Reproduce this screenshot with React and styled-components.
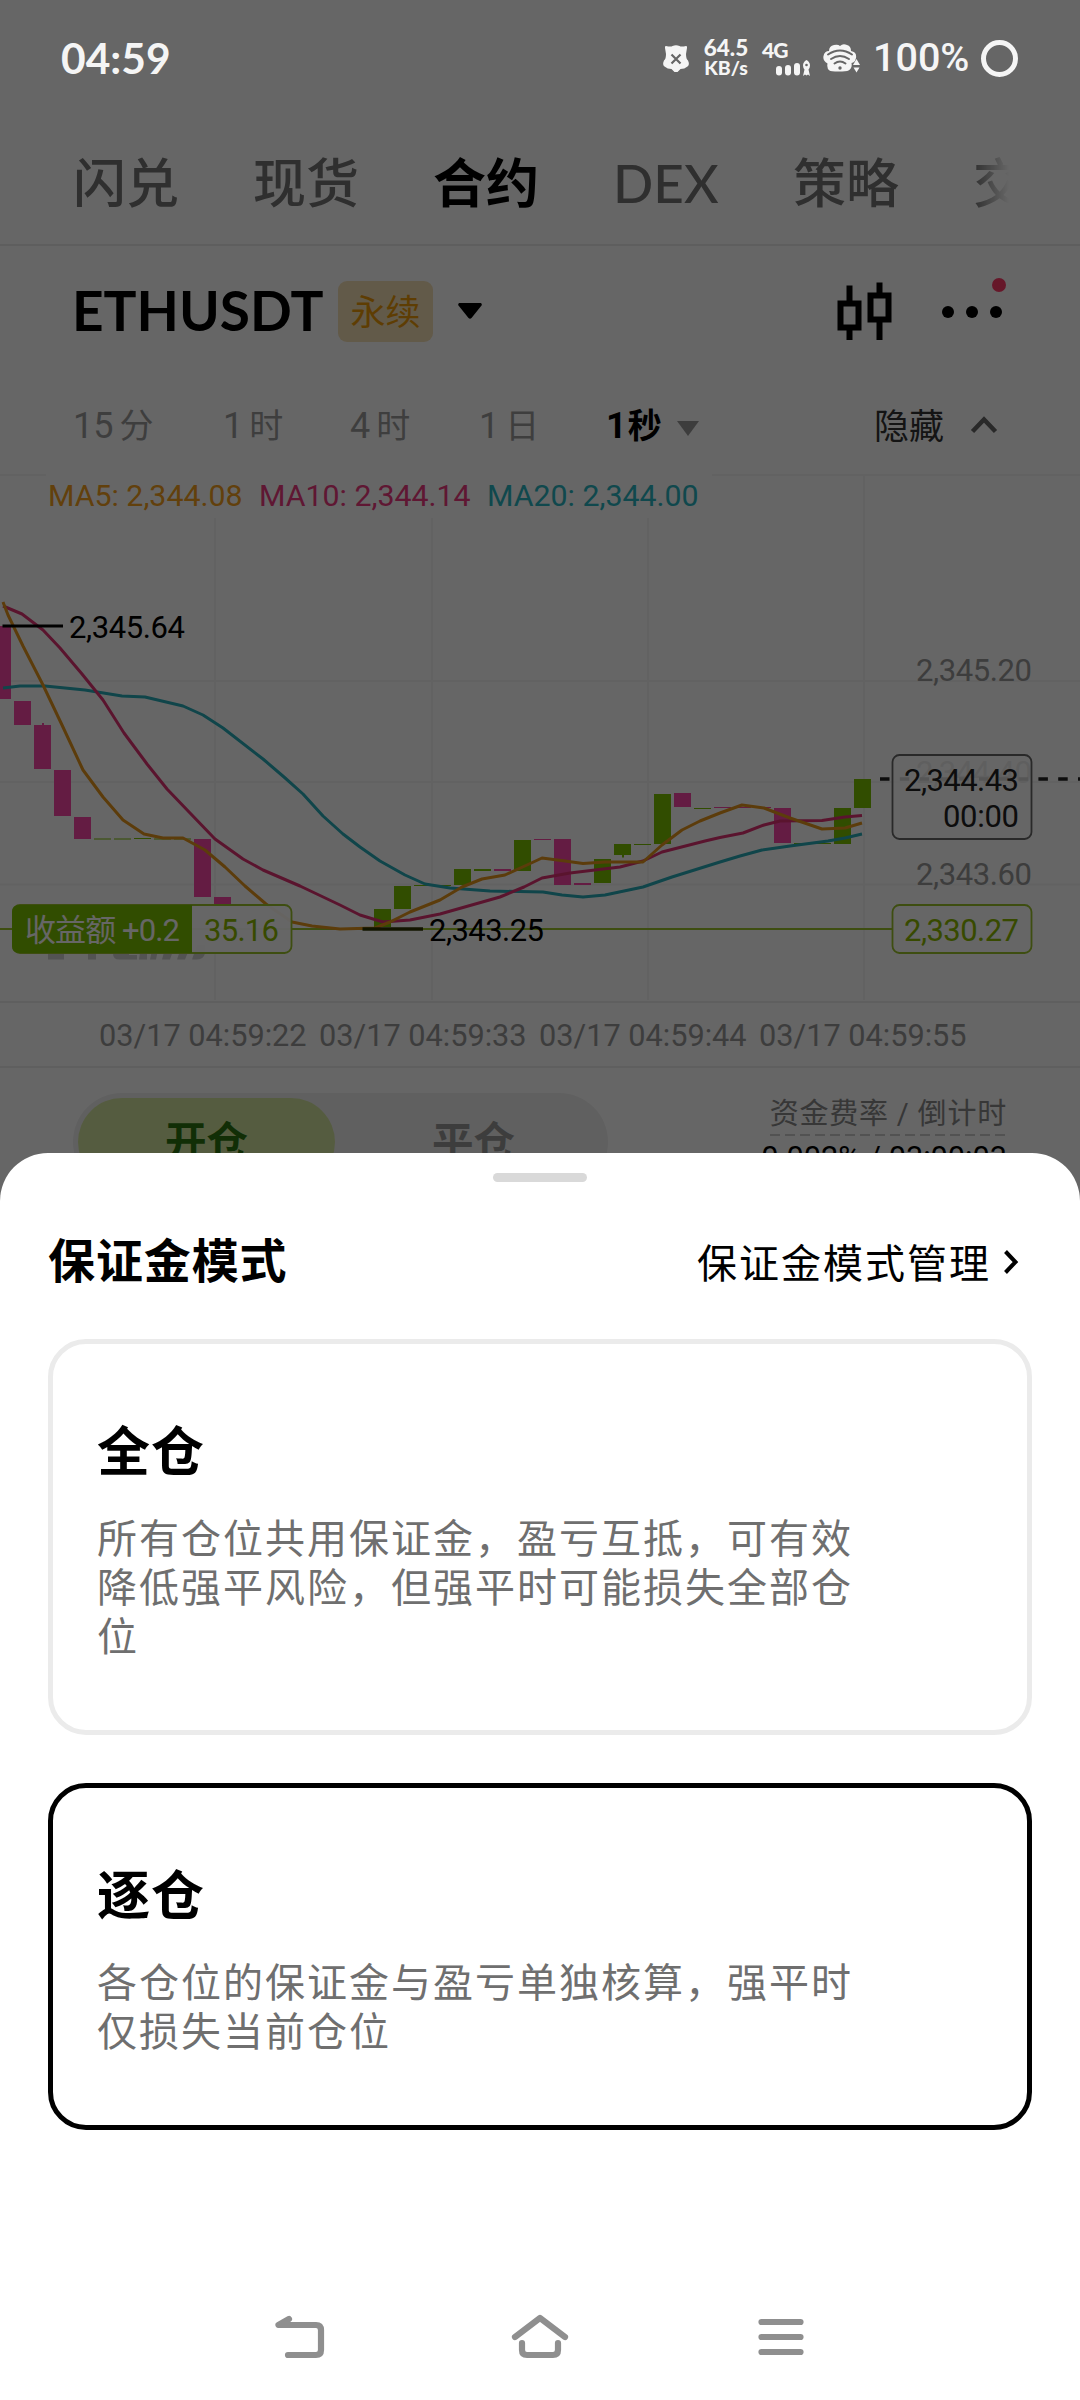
import React from "react";
import styled, { createGlobalStyle } from "styled-components";

const tabs = ["闪兑", "现货", "合约", "DEX", "策略", "交易"];

const intervals = [
  { num: "15", unit: "分", width: 150 },
  { num: "1", unit: "时", width: 127 },
  { num: "4", unit: "时", width: 129 },
  { num: "1", unit: "日", width: 127 },
];

const averages = [
  { label: "MA5: 2,344.08", color: "#f5a020", width: 211 },
  { label: "MA10: 2,344.14", color: "#ee3a80", width: 228 },
  { label: "MA20: 2,344.00", color: "#28b4c0", width: 225 },
];

const times = ["03/17 04:59:22", "03/17 04:59:33", "03/17 04:59:44", "03/17 04:59:55"];

const modes = [
  {
    id: "cross",
    title: "全仓",
    text: "所有仓位共用保证金，盈亏互抵，可有效降低强平风险，但强平时可能损失全部仓位",
  },
  {
    id: "isolated",
    title: "逐仓",
    text: "各仓位的保证金与盈亏单独核算，强平时仅损失当前仓位",
  },
];

const UP = "#7cc000";
const DOWN = "#fa46a8";

// [x, top, bottom, direction]
const candles = [
  [-6, 626, 699, 0],
  [14, 701, 725, 0],
  [34, 725, 769, 0],
  [54, 770, 816, 0],
  [74, 817, 839, 0],
  [94, 838.5, 839.5, 1],
  [114, 838.5, 839.5, 1],
  [134, 838, 839, 1],
  [154, 838.5, 839.5, 1],
  [174, 838.5, 839.5, 1],
  [194, 839, 897, 0],
  [214, 897, 906, 0],
  [374, 909, 927, 1],
  [394, 886, 909, 1],
  [414, 885, 886, 1],
  [434, 885, 886, 1],
  [454, 869, 885, 1],
  [474, 869, 871, 1],
  [494, 869, 871, 0],
  [514, 840, 871, 1],
  [534, 839, 840, 0],
  [554, 839, 885, 0],
  [574, 883, 885, 0],
  [594, 859, 883, 1],
  [614, 844, 855, 1],
  [634, 844, 845, 1],
  [654, 794, 844, 1],
  [674, 793, 807, 0],
  [694, 808, 809, 1],
  [714, 807, 808, 0],
  [734, 807, 808, 0],
  [754, 807, 808, 0],
  [774, 808, 843, 0],
  [794, 843, 844, 1],
  [814, 843, 844, 1],
  [834, 808, 844, 1],
  [854, 779, 808, 1],
];

const ma5 =
  "3,602 8,615 23,646 43,685 62,725 83,770 103,797 123,820 144,834 163,838 183,838 205,850 225,867 245,886 266,904 292,922 312,926 340,929 375,928 390,922 410,912 440,900 462,887 482,879 505,875 527,865 542,858 565,861 583,863.5 605,862 643,862 662,845 682,830 700,821 720,813 742,805 764,808 790,818 822,829 845,828 862,823";
const ma10 =
  "3,606 22,614 43,630 60,648 82,674 103,700 124,733 147,764 167,789 190,813 215,839 243,859 263,870 300,886 340,905 360,915 383,922 410,920 440,914 500,897 524,887 542,878 570,873 620,867 643,861 662,852 705,841 720,837.5 743,833 764,825 780,821 822,820.5 845,817 862,815.5";
const ma20 =
  "3,688 20,686 45,686 85,690 122,696 145,697 183,706 203,715 223,728 263,759 284,777 303,794 323,816 343,834 360,847 380,861 405,875 425,884 450,888 490,891 543,892 562,895 583,897 605,895 643,887 672,877 720,862 740,856 762,850 790,846 828,841 845,838 862,834";

const Price = ({ x, y, width, color, children }) => (
  <text x={x} y={y} textLength={width} fill={color} fontSize="31">
    {children}
  </text>
);

const Chart = () => (
  <ChartSvg viewBox="0 474 1080 527">
    <g stroke="#f5f5f5" strokeWidth="2">
      {[215, 432, 648, 864].map((x) => (
        <line key={x} x1={x} x2={x} y1="474" y2="1000" />
      ))}
      {[475, 681, 782, 884.5].map((y) => (
        <line key={y} x1="0" x2="1080" y1={y} y2={y} />
      ))}
    </g>

    {/* bottom edge of the watermark, the label hides the rest */}
    <g fill="#d0d0d0">
      <path d="M48 945h16v14.500h-16zM88 945h8v14.500h-8zM113 945h24v8h-8v2h8v4.500h-18q-6 0-6-6zM141 945h6v14.500h-8zM153 945h6l-3 14.500h-6zM166 945h9l-5 14.500h-8zM182 945h9l-6 14.500h-8zM197 945h8q2 14.500-8 14.500h-5z" />
    </g>

    {candles.map(([x, top, bottom, up]) => (
      <rect key={x} x={x} y={top} width="17" height={bottom - top} fill={up ? UP : DOWN} />
    ))}
    <rect x="42" y="723" width="2" height="3" fill={DOWN} />
    <rect x="622" y="855" width="2" height="2.500" fill={UP} />

    <line x1="0" x2="892" y1="929" y2="929" stroke="#9cc22c" strokeWidth="1.800" />

    <g fill="none" strokeWidth="3" strokeLinejoin="round">
      <polyline points={ma20} stroke="#28acb8" />
      <polyline points={ma10} stroke="#e03474" />
      <polyline points={ma5} stroke="#e6961c" />
    </g>

    <line x1="2.500" x2="63" y1="626" y2="626" stroke="#000" strokeWidth="3" />
    <Price x={69} y={638} width={116} color="#000">2,345.64</Price>
    <line x1="362.500" x2="423" y1="929" y2="929" stroke="#2d3600" strokeWidth="3.500" />
    <Price x={429} y={941} width={115} color="#000">2,343.25</Price>

    <Price x={916} y={681} width={116} color="#999">2,345.20</Price>
    <Price x={916} y={783} width={116} color="#999">2,344.40</Price>
    <Price x={916} y={885} width={116} color="#999">2,343.60</Price>

    <line x1="880" x2="1080" y1="779" y2="779" stroke="#222" strokeWidth="3.500" strokeDasharray="9.500 10.300" />
    <rect x="892.500" y="755" width="139" height="84" rx="7" fill="#fff" fillOpacity=".82" stroke="#666" strokeWidth="1.800" />
    <Price x={904} y={791} width={115} color="#222">2,344.43</Price>
    <Price x={943} y={827} width={76} color="#222">00:00</Price>

    <rect x="892.500" y="905" width="139" height="48" rx="7" fill="#fff" stroke="#9cc22c" strokeWidth="1.800" />
    <Price x={904} y={941} width={115} color="#8cba00">2,330.27</Price>

    <rect x="13" y="905" width="278.500" height="48" rx="7" fill="#fff" fillOpacity=".95" stroke="#9cc22c" strokeWidth="1.800" />
    <path d="M19 905h173v48h-173q-7 0-7-7v-34q0-7 7-7z" fill={UP} />
    <Price x={25} y={941} width={155} color="#fff">收益额 +0.2</Price>
    <Price x={204} y={941} width={75} color="#8cba00">35.16</Price>
  </ChartSvg>
);

const MuteIcon = () => (
  <svg width="28" height="29" viewBox="0 0 28 29">
    <path
      d="M4 2q5 1 6.500 0 3.500-1.500 7 0 1.500 1 6.500 0 1.500 0 1 2l-1 6q0 5 2 6.500 2 4-.5 6-3 2.500-7 2.500l-3 3h-3l-3-3q-4 0-7-2.500-2.500-2-.5-6 2-1.500 2-6.500l-1-6q-.5-2 1-2z"
      fill="#f5f5f5"
    />
    <path d="M9.500 10.500l9 9M18.500 10.500l-9 9" stroke="#666" strokeWidth="2.200" />
  </svg>
);

const SignalIcon = () => (
  <svg width="36" height="17" viewBox="0 0 36 17">
    <g fill="#f5f5f5">
      <rect x="1" y="6" width="6" height="9.500" rx="3" />
      <rect x="10" y="5" width="6" height="10.500" rx="3" />
      <rect x="19" y="3" width="6" height="12.500" rx="3" />
      <path d="M31.500 0q3.500 2 3.500 5.500 0 2-1.500 4l1.500 6.500-2-1.500-1.500 1-1.500-1-2 1.500 1.500-6.500q-1.500-2-1.500-4 0-3.500 3.500-5.500z" />
    </g>
    <circle cx="31.500" cy="5" r="1.300" fill="#666" />
  </svg>
);

const WifiIcon = () => (
  <svg width="37" height="30" viewBox="0 0 37 30">
    <path
      d="M6 8q0-5 5-6 4-1 6 1 3-3 7-1 4 1 4 6 6 1 5 7l-1 3q-2 2-3.500 2 1 5-3 7.500-2 1-10 1t-9-1q-3-2-2-7-5-3-4-7.500 1-5 5.500-5z"
      fill="#f5f5f5"
    />
    <g fill="none" stroke="#666" strokeWidth="2" strokeLinecap="round">
      <path d="M5 11.500q12-8 24 0" />
      <path d="M8 16q9-6 18 0" />
      <path d="M11.500 20.500q5.500-4 11 0" />
    </g>
    <circle cx="17" cy="25" r="1.700" fill="#666" />
    <path d="M33.500 16l3.500 6h-7z" fill="#f5f5f5" />
    <path d="M30.500 24.500h6l-3 5z" fill="#f5f5f5" />
  </svg>
);

const App = () => (
  <Screen>
    <GlobalStyle />
    <StatusBar>
      <Clock>04:59</Clock>
      <StatusIcons>
        <MuteIcon />
        <Speed>
          <span>64.5</span>
          <small>KB/s</small>
        </Speed>
        <Network>
          <span>4G</span>
          <SignalIcon />
        </Network>
        <WifiIcon />
        <Battery>100%</Battery>
        <Ring />
      </StatusIcons>
    </StatusBar>

    <Tabs>
      {tabs.map((tab) => (
        <Tab key={tab} $active={tab === "合约"}>
          {tab}
        </Tab>
      ))}
    </Tabs>

    <PairRow>
      <Pair>ETHUSDT</Pair>
      <Badge>永续</Badge>
      <svg width="26" height="18" viewBox="0 0 26 18">
        <path d="M2 1h22q1.500 1 .5 2.500l-10 12.500q-1.500 1.500-3 0l-10-12.500q-1-1.500.5-2.500z" fill="#000" />
      </svg>
      <PairActions>
        <svg width="55" height="58" viewBox="0 0 55 58">
          <g fill="none" stroke="#000" strokeWidth="6">
            <path d="M3.500 21.500h18v24h-18zM33.500 13.500h18v24h-18z" />
            <path d="M12.500 3.500v17M12.500 46v12M42.500 .5v13M42.500 38v20" />
          </g>
        </svg>
        <MoreButton>
          <i />
          <i />
          <i />
          <Dot />
        </MoreButton>
      </PairActions>
    </PairRow>

    <IntervalRow>
      {intervals.map((item) => (
        <Interval key={item.num + item.unit} $width={item.width}>
          {item.num}
          <span>{item.unit}</span>
        </Interval>
      ))}
      <Interval $width={71} $active>
        1<span>秒</span>
      </Interval>
      <IntervalArrow width="22" height="16" viewBox="0 0 22 16">
        <path d="M0 0h22l-11 15z" fill="#999" />
      </IntervalArrow>
      <Hide>
        <span>隐藏</span>
        <svg width="28" height="18" viewBox="0 0 28 18">
          <path d="M2.500 15.500l11.500-12 11.500 12" fill="none" stroke="#666" strokeWidth="4.500" />
        </svg>
      </Hide>
    </IntervalRow>

    <ChartArea>
      <Chart />
      <Averages>
        {averages.map((ma) => (
          <Average key={ma.label} $color={ma.color} $width={ma.width}>
            {ma.label}
          </Average>
        ))}
      </Averages>
    </ChartArea>

    <TimeAxis>
      {times.map((time) => (
        <span key={time}>{time}</span>
      ))}
    </TimeAxis>

    <OrderRow>
      <Segment>
        <SegmentItem $active>开仓</SegmentItem>
        <SegmentItem>平仓</SegmentItem>
      </Segment>
      <Funding>
        <FundingLabel>资金费率 / 倒计时</FundingLabel>
        <FundingValue>0.002% / 03:00:03</FundingValue>
      </Funding>
    </OrderRow>

    <Backdrop />

    <Sheet>
      <Handle />
      <SheetHeader>
        <SheetTitle>保证金模式</SheetTitle>
        <SheetLink>
          <span>保证金模式管理</span>
          <svg width="16" height="26" viewBox="0 0 16 26">
            <path d="M2.500 2.500l10 10.500-10 10.500" fill="none" stroke="#000" strokeWidth="4" />
          </svg>
        </SheetLink>
      </SheetHeader>
      {modes.map((mode) => (
        <ModeCard key={mode.id} $selected={mode.id === "isolated"}>
          <h2>{mode.title}</h2>
          <p>{mode.text}</p>
        </ModeCard>
      ))}
      <NavBar>
        <svg width="50" height="46" viewBox="0 0 50 46">
          <path d="M14 5l-10.500 6h37.500q5 0 5 5v20q0 5-5 5h-28" />
        </svg>
        <svg width="58" height="46" viewBox="0 0 58 46">
          <path d="M4 23l25-19 25 19M11 29v7q0 5 5 5h26q5 0 5-5v-7" />
        </svg>
        <svg width="49" height="46" viewBox="-3 0 49 46">
          <path d="M3.500 8h39M3.500 23h39M3.500 38h39" />
        </svg>
      </NavBar>
    </Sheet>
  </Screen>
);

const GlobalStyle = createGlobalStyle`
  body {
    margin: 0;
  }

  * {
    box-sizing: border-box;
  }

  svg {
    display: block;
    flex-shrink: 0;
  }
`;

const Screen = styled.div`
  position: relative;
  width: 1080px;
  height: 2400px;
  overflow: hidden;
  background: #fff;
  color: #000;
  font-family: Roboto, "Noto Sans CJK SC", sans-serif;
`;

const StatusBar = styled.header`
  position: relative;
  z-index: 2;
  display: flex;
  justify-content: space-between;
  height: 116px;
  padding: 0 62px 0 61px;
  align-items: center;
  color: #f5f5f5;
  font-family: Lato, sans-serif;
`;

const Clock = styled.div`
  font-size: 42.5px;
  font-weight: 700;
  line-height: 50px;
`;

const StatusIcons = styled.div`
  display: flex;
  align-items: center;
`;

const Speed = styled.div`
  display: flex;
  flex-direction: column;
  align-items: center;
  width: 48px;
  margin-left: 12px;
  font-size: 22.5px;
  font-weight: 900;
  line-height: 20px;

  small {
    font-size: 19.5px;
  }
`;

const Network = styled.div`
  display: flex;
  flex-direction: column;
  width: 49px;
  margin: 0 12px 0 12px;
  font-size: 21px;
  font-weight: 900;
  line-height: 20px;
  letter-spacing: -1px;

  svg {
    align-self: flex-end;
  }
`;

const Battery = styled.div`
  width: 98px;
  margin: 0 10px 0 13px;
  font-family: Roboto, sans-serif;
  font-size: 39.5px;
  font-weight: 500;
  line-height: 50px;
`;

const Ring = styled.div`
  width: 37px;
  height: 37px;
  border: 5px solid #f5f5f5;
  border-radius: 50%;
`;

const Tabs = styled.nav`
  display: flex;
  gap: 72px;
  width: 1080px;
  height: 130px;
  padding: 28px 0 0 73px;
  border-bottom: 2px solid #ebebeb;
  overflow: hidden;
  font-family: Lato, "Noto Sans CJK SC", sans-serif;
`;

const Tab = styled.div`
  flex-shrink: 0;
  width: 108px;
  font-size: 53px;
  font-weight: ${(p) => (p.$active ? 700 : 500)};
  line-height: 77px;
  color: ${(p) => (p.$active ? "#000" : "#777")};
  white-space: nowrap;

  &:last-child {
    width: 36px;
    overflow: hidden;
    mask-image: linear-gradient(90deg, #000, transparent);
  }
`;

const PairRow = styled.div`
  display: flex;
  align-items: center;
  height: 130px;
  padding: 0 78px 0 72px;
`;

const Pair = styled.div`
  width: 266px;
  margin-bottom: 2px;
  font-family: Lato, sans-serif;
  font-size: 55px;
  font-weight: 700;
  line-height: 70px;
`;

const Badge = styled.div`
  width: 95px;
  height: 61px;
  margin-right: 24px;
  border-radius: 9px;
  background: #f6e0b6;
  color: #eb9a08;
  font-size: 35px;
  line-height: 65px;
  text-align: center;
`;

const PairActions = styled.div`
  display: flex;
  align-items: center;
  gap: 50px;
  margin-left: auto;
`;

const MoreButton = styled.div`
  position: relative;
  display: flex;
  gap: 12px;
  margin-top: 2px;

  i {
    width: 12px;
    height: 12px;
    border-radius: 50%;
    background: #000;
  }
`;

const Dot = styled.div`
  position: absolute;
  top: -28px;
  right: -4px;
  width: 14px;
  height: 14px;
  border-radius: 50%;
  background: #ff3a68;
`;

const IntervalRow = styled.div`
  display: flex;
  align-items: center;
  height: 98px;
  padding: 0 82px 0 73px;
`;

const Interval = styled.div`
  width: ${(p) => p.$width}px;
  padding-top: 2px;
  font-size: 36px;
  font-weight: ${(p) => (p.$active ? 700 : 400)};
  line-height: 50px;
  color: ${(p) => (p.$active ? "#000" : "#9c9c9c")};

  span {
    margin-left: ${(p) => (p.$active ? 1 : 6)}px;
    font-size: 34px;
  }
`;

const IntervalArrow = styled.svg`
  margin-top: 8px;
`;

const Hide = styled.div`
  display: flex;
  align-items: center;
  gap: 26px;
  margin-left: auto;
  color: #333;
  font-size: 35px;
  line-height: 50px;

  span {
    padding-top: 6px;
  }
`;

const ChartArea = styled.div`
  position: relative;
  height: 527px;
`;

const ChartSvg = styled.svg`
  width: 1080px;
  height: 527px;
`;

/* floats over the grid, hides the lines behind it */
const Averages = styled.div`
  position: absolute;
  top: 0;
  left: 46px;
  display: flex;
  padding-left: 2px;
  background: #fff;
`;

const Average = styled.div`
  width: ${(p) => p.$width}px;
  font-size: 30.3px;
  line-height: 44px;
  color: ${(p) => p.$color};
  white-space: nowrap;
`;

const TimeAxis = styled.div`
  display: flex;
  gap: 12px;
  height: 67px;
  padding-left: 99px;
  border-top: 2px solid #ededed;
  border-bottom: 2px solid #ededed;
  font-size: 30.7px;
  line-height: 65px;
  color: #999;

  span {
    width: 208px;
    white-space: nowrap;
  }
`;

const OrderRow = styled.div`
  display: flex;
  justify-content: space-between;
  padding: 25px 73px 0;
`;

const Segment = styled.div`
  display: flex;
  width: 535px;
  height: 98px;
  padding: 5px;
  border-radius: 49px;
  background: #f0f0f0;
`;

const SegmentItem = styled.div`
  flex: 0 0 257px;
  height: 88px;
  border-radius: 44px;
  background: ${(p) => (p.$active ? "#d5e6a0" : "transparent")};
  color: ${(p) => (p.$active ? "#2c7410" : "#999")};
  font-size: 41.5px;
  font-weight: 700;
  line-height: 89px;
  text-align: center;

  & + & {
    margin-left: 10px;
  }
`;

const Funding = styled.div`
  display: flex;
  flex-direction: column;
  align-items: flex-end;
`;

const FundingLabel = styled.div`
  height: 43px;
  background: repeating-linear-gradient(90deg, #ccc 0 10px, transparent 10px 15px) bottom / 100% 2px no-repeat;
  font-size: 29px;
  line-height: 43px;
  letter-spacing: 0.8px;
  color: #8a8a8a;
`;

const FundingValue = styled.div`
  margin-top: 1px;
  font-size: 30.7px;
  line-height: 42px;
`;

const Backdrop = styled.div`
  position: absolute;
  inset: 0;
  z-index: 1;
  background: rgba(0, 0, 0, 0.6);
`;

const Sheet = styled.section`
  position: absolute;
  right: 0;
  bottom: 0;
  left: 0;
  z-index: 3;
  display: flex;
  flex-direction: column;
  height: 1247px;
  padding: 20px 48px 0;
  border-radius: 48px 48px 0 0;
  background: #fff;
`;

const Handle = styled.div`
  align-self: center;
  width: 94px;
  height: 9px;
  border-radius: 5px;
  background: #d9d9d9;
`;

const SheetHeader = styled.div`
  display: flex;
  justify-content: space-between;
  align-items: center;
  height: 157px;
  padding-right: 13px;
`;

const SheetTitle = styled.h1`
  margin: 2px 0 0;
  font-size: 47px;
  font-weight: 700;
  line-height: 64px;
  letter-spacing: 0.9px;
`;

const SheetLink = styled.div`
  display: flex;
  align-items: center;
  gap: 12px;
  font-size: 40px;
  line-height: 60px;
  letter-spacing: 2px;

  span {
    padding-top: 9px;
  }

  svg {
    margin-top: 3px;
  }
`;

const ModeCard = styled.article`
  margin-bottom: 48px;
  padding: 71px 44px 68px;
  border: 5px solid ${(p) => (p.$selected ? "#000" : "#ebebeb")};
  border-radius: 38px;

  h2 {
    margin: 0;
    font-size: 53px;
    font-weight: 700;
    line-height: 76px;
    letter-spacing: 1px;
  }

  p {
    width: 762px;
    margin: 24px 0 0;
    color: #6f6f6f;
    font-size: 40px;
    line-height: 49px;
    letter-spacing: 2px;
  }
`;

const NavBar = styled.div`
  display: flex;
  gap: 186px;
  margin-top: auto;
  padding: 0 0 40px 227px;

  path {
    fill: none;
    stroke: #8f8f8f;
    stroke-width: 6.2;
    stroke-linecap: round;
    stroke-linejoin: round;
  }
`;

export default App;
